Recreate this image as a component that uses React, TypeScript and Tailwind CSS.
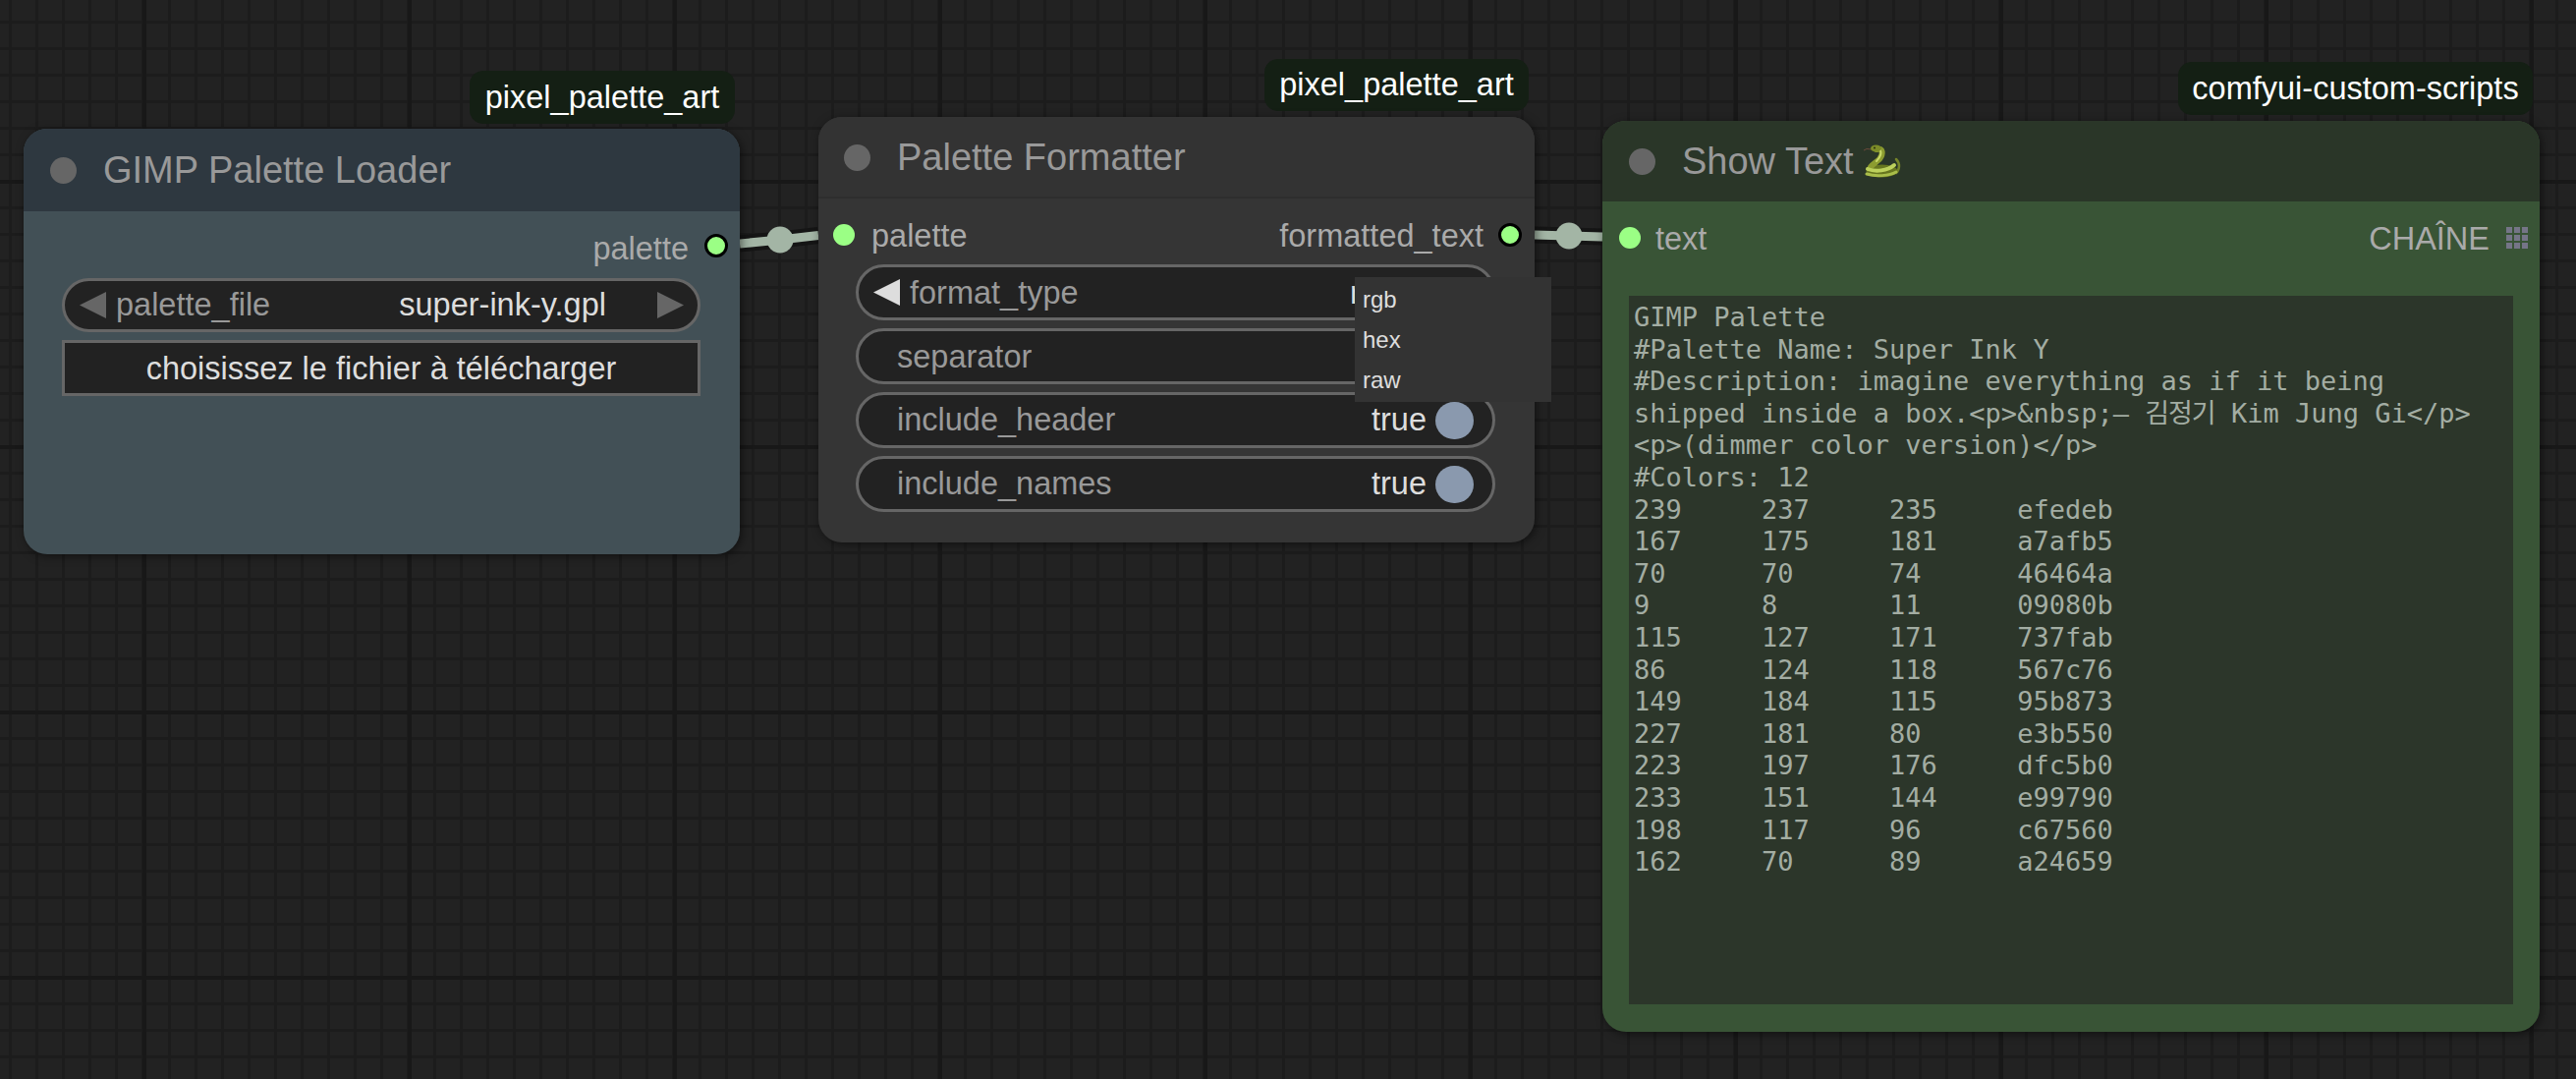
import { ReactNode } from 'react'

const sans = 'font-["Liberation_Sans",Arial,sans-serif]'

const colors = [
  [239, 237, 235, 'efedeb'],
  [167, 175, 181, 'a7afb5'],
  [70, 70, 74, '46464a'],
  [9, 8, 11, '09080b'],
  [115, 127, 171, '737fab'],
  [86, 124, 118, '567c76'],
  [149, 184, 115, '95b873'],
  [227, 181, 80, 'e3b550'],
  [223, 197, 176, 'dfc5b0'],
  [233, 151, 144, 'e99790'],
  [198, 117, 96, 'c67560'],
  [162, 70, 89, 'a24659'],
]

const colorRows = colors.map((row) => row.join('\t')).join('\n')

function Dot({ linked }: { linked?: boolean }) {
  if (linked) {
    return <span className="h-6 w-6 shrink-0 rounded-full border-[3px] border-black bg-[#9bff85]" />
  }
  return <span className="h-[22px] w-[22px] shrink-0 rounded-full bg-[#9bff85]" />
}

function Arrow({ dir, color }: { dir: 'left' | 'right'; color: string }) {
  return (
    <svg width="27" height="27" viewBox="0 0 27 27" className="shrink-0">
      <polygon points={dir === 'left' ? '0,13.5 27,0 27,27' : '27,13.5 0,0 0,27'} fill={color} />
    </svg>
  )
}

function Badge({ text, className }: { text: string; className: string }) {
  return (
    <div className={`absolute flex items-center justify-center rounded-[14px] bg-[#141f14] text-[32.5px] text-white ${className}`}>
      {text}
    </div>
  )
}

function NodeHeader({ title, className, children }: { title: string; className: string; children?: ReactNode }) {
  return (
    <div className={`flex items-center text-[38px] text-[#999] ${className}`}>
      <span className="h-[27px] w-[27px] shrink-0 rounded-full bg-[#666]" />
      <span className="ml-[27px]">{title}</span>
      {children}
    </div>
  )
}

function Toggle({ label }: { label: string }) {
  return (
    <div className="flex h-[57px] items-center rounded-full border-[3px] border-[#666] bg-[#222] pl-[39px] pr-[19px] text-[32.5px]">
      <span className="text-[#999]">{label}</span>
      <span className="ml-auto text-[#ddd]">true</span>
      <span className="ml-[9px] h-[38px] w-[39px] rounded-full bg-[#8a99ae]" />
    </div>
  )
}

function Snake() {
  return (
    <svg width="38" height="34" viewBox="0 0 38 34" className="ml-[10px] shrink-0">
      <path d="M0 6 L3 4.5 L8 5" fill="none" stroke="#6b4a3a" strokeWidth="1" />
      <path d="M33 15 C 37 19, 37 25, 33 29" fill="none" stroke="#75842a" strokeWidth="2.5" strokeLinecap="round" />
      <ellipse cx="18.5" cy="27" rx="16" ry="6.5" fill="#67761f" />
      <path d="M13 5 C 20 3, 20 10, 16 15 C 13 18, 9 20, 7 23" fill="none" stroke="#8c9c30" strokeWidth="6" strokeLinecap="round" />
      <path d="M16 5 C 19 8, 17 13, 13 17" fill="none" stroke="#c7d868" strokeWidth="2" strokeLinecap="round" />
      <path d="M4 25 C 12 28, 24 27, 31 21" fill="none" stroke="#bcd05c" strokeWidth="4" strokeLinecap="round" />
      <path d="M3 30 C 12 33, 26 32, 33 28" fill="none" stroke="#a9bd4a" strokeWidth="3" strokeLinecap="round" />
      <ellipse cx="12.5" cy="4" rx="5.5" ry="3.5" fill="#7c8c28" />
      <circle cx="11" cy="3.5" r="1" fill="#2a3010" />
    </svg>
  )
}

function GridIcon() {
  return (
    <div className="ml-[17px] grid h-[22px] w-[22px] grid-cols-3 grid-rows-3 gap-[2.5px]">
      {Array.from({ length: 9 }).map((_, i) => (
        <span key={i} className="bg-[#757587]" />
      ))}
    </div>
  )
}

export default function App() {
  return (
    <div
      className={`relative h-[1098px] w-[2622px] overflow-hidden bg-[#222] bg-[image:linear-gradient(90deg,#181818_4px,transparent_4px),linear-gradient(#181818_4px,transparent_4px),linear-gradient(90deg,#1c1c1c_3px,transparent_3px),linear-gradient(#1c1c1c_3px,transparent_3px)] bg-[size:270px_270px,270px_270px,27px_27px,27px_27px] bg-[position:145px_0,0_183px,9px_0,0_21px] ${sans}`}
    >
      {/* links between the nodes */}
      <svg width="2622" height="1098" className="absolute left-0 top-0">
        <path d="M753 248 L794 244 L833 239.5" stroke="#151515" strokeWidth="17" fill="none" />
        <path d="M753 248 L794 244 L833 239.5" stroke="#a3b5a5" strokeWidth="9" fill="none" />
        <circle cx="794" cy="244" r="13.5" fill="#a3b5a5" />
        <path d="M1562 239 L1597 240 L1631 241" stroke="#151515" strokeWidth="17" fill="none" />
        <path d="M1562 239 L1597 240 L1631 241" stroke="#a3b5a5" strokeWidth="9" fill="none" />
        <circle cx="1597" cy="240" r="13.5" fill="#a3b5a5" />
      </svg>

      <Badge text="pixel_palette_art" className="left-[478px] top-[72px] h-[54px] w-[270px]" />
      <Badge text="pixel_palette_art" className="left-[1287px] top-[60px] h-[53px] w-[269px]" />
      <Badge text="comfyui-custom-scripts" className="left-[2217px] top-[63px] h-[54px] w-[361px]" />

      {/* GIMP Palette Loader */}
      <div className="absolute left-[24px] top-[131px] h-[433px] w-[729px] overflow-hidden rounded-[24px] bg-[#425056] shadow-[2px_2px_10px_rgba(0,0,0,0.5)]">
        <NodeHeader title="GIMP Palette Loader" className="h-[84px] bg-[#2e3840] pl-[27px]" />
        <div className="mt-4 flex h-[38px] items-center justify-end pr-3 text-[32.5px] text-[#aaa]">
          <span className="mt-[6px]">palette</span>
          <span className="ml-4 flex"><Dot linked /></span>
        </div>
        <div className="ml-[39px] mr-[40px] mt-[14px] flex flex-col gap-2 text-[32.5px]">
          <div className="flex h-[55px] items-center rounded-full border-[3px] border-[#666] bg-[#222] pl-[15px] pr-[14px]">
            <Arrow dir="left" color="#666" />
            <span className="ml-[10px] text-[#999]">palette_file</span>
            <span className="ml-auto mr-[52px] text-[#ddd]">super-ink-y.gpl</span>
            <Arrow dir="right" color="#666" />
          </div>
          <div className="flex h-[57px] items-center justify-center border-[3px] border-[#666] bg-[#222] pt-[2px] text-[#ddd]">
            choisissez le fichier à télécharger
          </div>
        </div>
      </div>

      {/* Palette Formatter */}
      <div className="absolute left-[833px] top-[119px] h-[433px] w-[729px] overflow-hidden rounded-[24px] bg-[#353535] shadow-[2px_2px_10px_rgba(0,0,0,0.5)]">
        <NodeHeader title="Palette Formatter" className="h-[83px] border-b-2 border-[#2e2e2e] bg-[#333] pl-[26px] pt-[2px]" />
        <div className="mt-[18px] flex h-[38px] items-center pl-[15px] pr-[13px] text-[32.5px] text-[#aaa]">
          <Dot />
          <span className="ml-[17px] mt-[3px]">palette</span>
          <span className="ml-auto mr-[15px] mt-[3px]">formatted_text</span>
          <Dot linked />
        </div>
        <div className="ml-[38px] mr-[40px] mt-[11px] flex flex-col gap-2">
          <div className="flex h-[57px] items-center rounded-full border-[3px] border-[#666] bg-[#222] pl-[15px] text-[32.5px]">
            <Arrow dir="left" color="#ddd" />
            <span className="ml-[10px] mt-[2px] text-[#999]">format_type</span>
            <span className="ml-auto mr-[98px] mt-[2px] text-[#ddd]">rgb</span>
          </div>
          <div className="flex h-[57px] items-center rounded-full border-[3px] border-[#666] bg-[#222] pl-[39px] text-[32.5px]">
            <span className="mt-[2px] text-[#999]">separator</span>
          </div>
          <Toggle label="include_header" />
          <Toggle label="include_names" />
        </div>
      </div>

      {/* dropdown that is open over format_type */}
      <div className="absolute left-[1379px] top-[282px] flex h-[127px] w-[200px] flex-col justify-center bg-[#333] pl-2 text-[24px] leading-[41px] text-[#ddd]">
        <span>rgb</span>
        <span>hex</span>
        <span>raw</span>
      </div>

      {/* Show Text */}
      <div className="absolute left-[1631px] top-[123px] flex h-[927px] w-[954px] flex-col overflow-hidden rounded-[24px] bg-[#395436] shadow-[2px_2px_10px_rgba(0,0,0,0.5)]">
        <NodeHeader title="Show Text" className="h-[82px] bg-[#2a3628] pl-[27px]">
          <Snake />
        </NodeHeader>
        <div className="mt-[18px] flex h-[38px] items-center pl-[17px] pr-3 text-[32.5px] text-[#aaa]">
          <Dot />
          <span className="ml-[15px] mt-[3px]">text</span>
          <span className="ml-auto mt-[3px]">CHAÎNE</span>
          <GridIcon />
        </div>
        <div className='mx-[27px] mb-7 mt-10 flex-1 whitespace-pre bg-[#2c362a] pl-[5px] pt-[6px] font-["DejaVu_Sans_Mono","Noto_Sans_CJK_KR",monospace] text-[27px] leading-[32.6px] text-[#a3ada3] [tab-size:8]'>
          {'GIMP Palette\n#Palette Name: Super Ink Y\n#Description: imagine everything as if it being\nshipped inside a box.<p>&nbsp;– '}
          <span className="tracking-[-1px]">김정기</span>
          {' Kim Jung Gi</p>\n<p>(dimmer color version)</p>\n#Colors: 12\n'}
          {colorRows}
        </div>
      </div>
    </div>
  )
}
